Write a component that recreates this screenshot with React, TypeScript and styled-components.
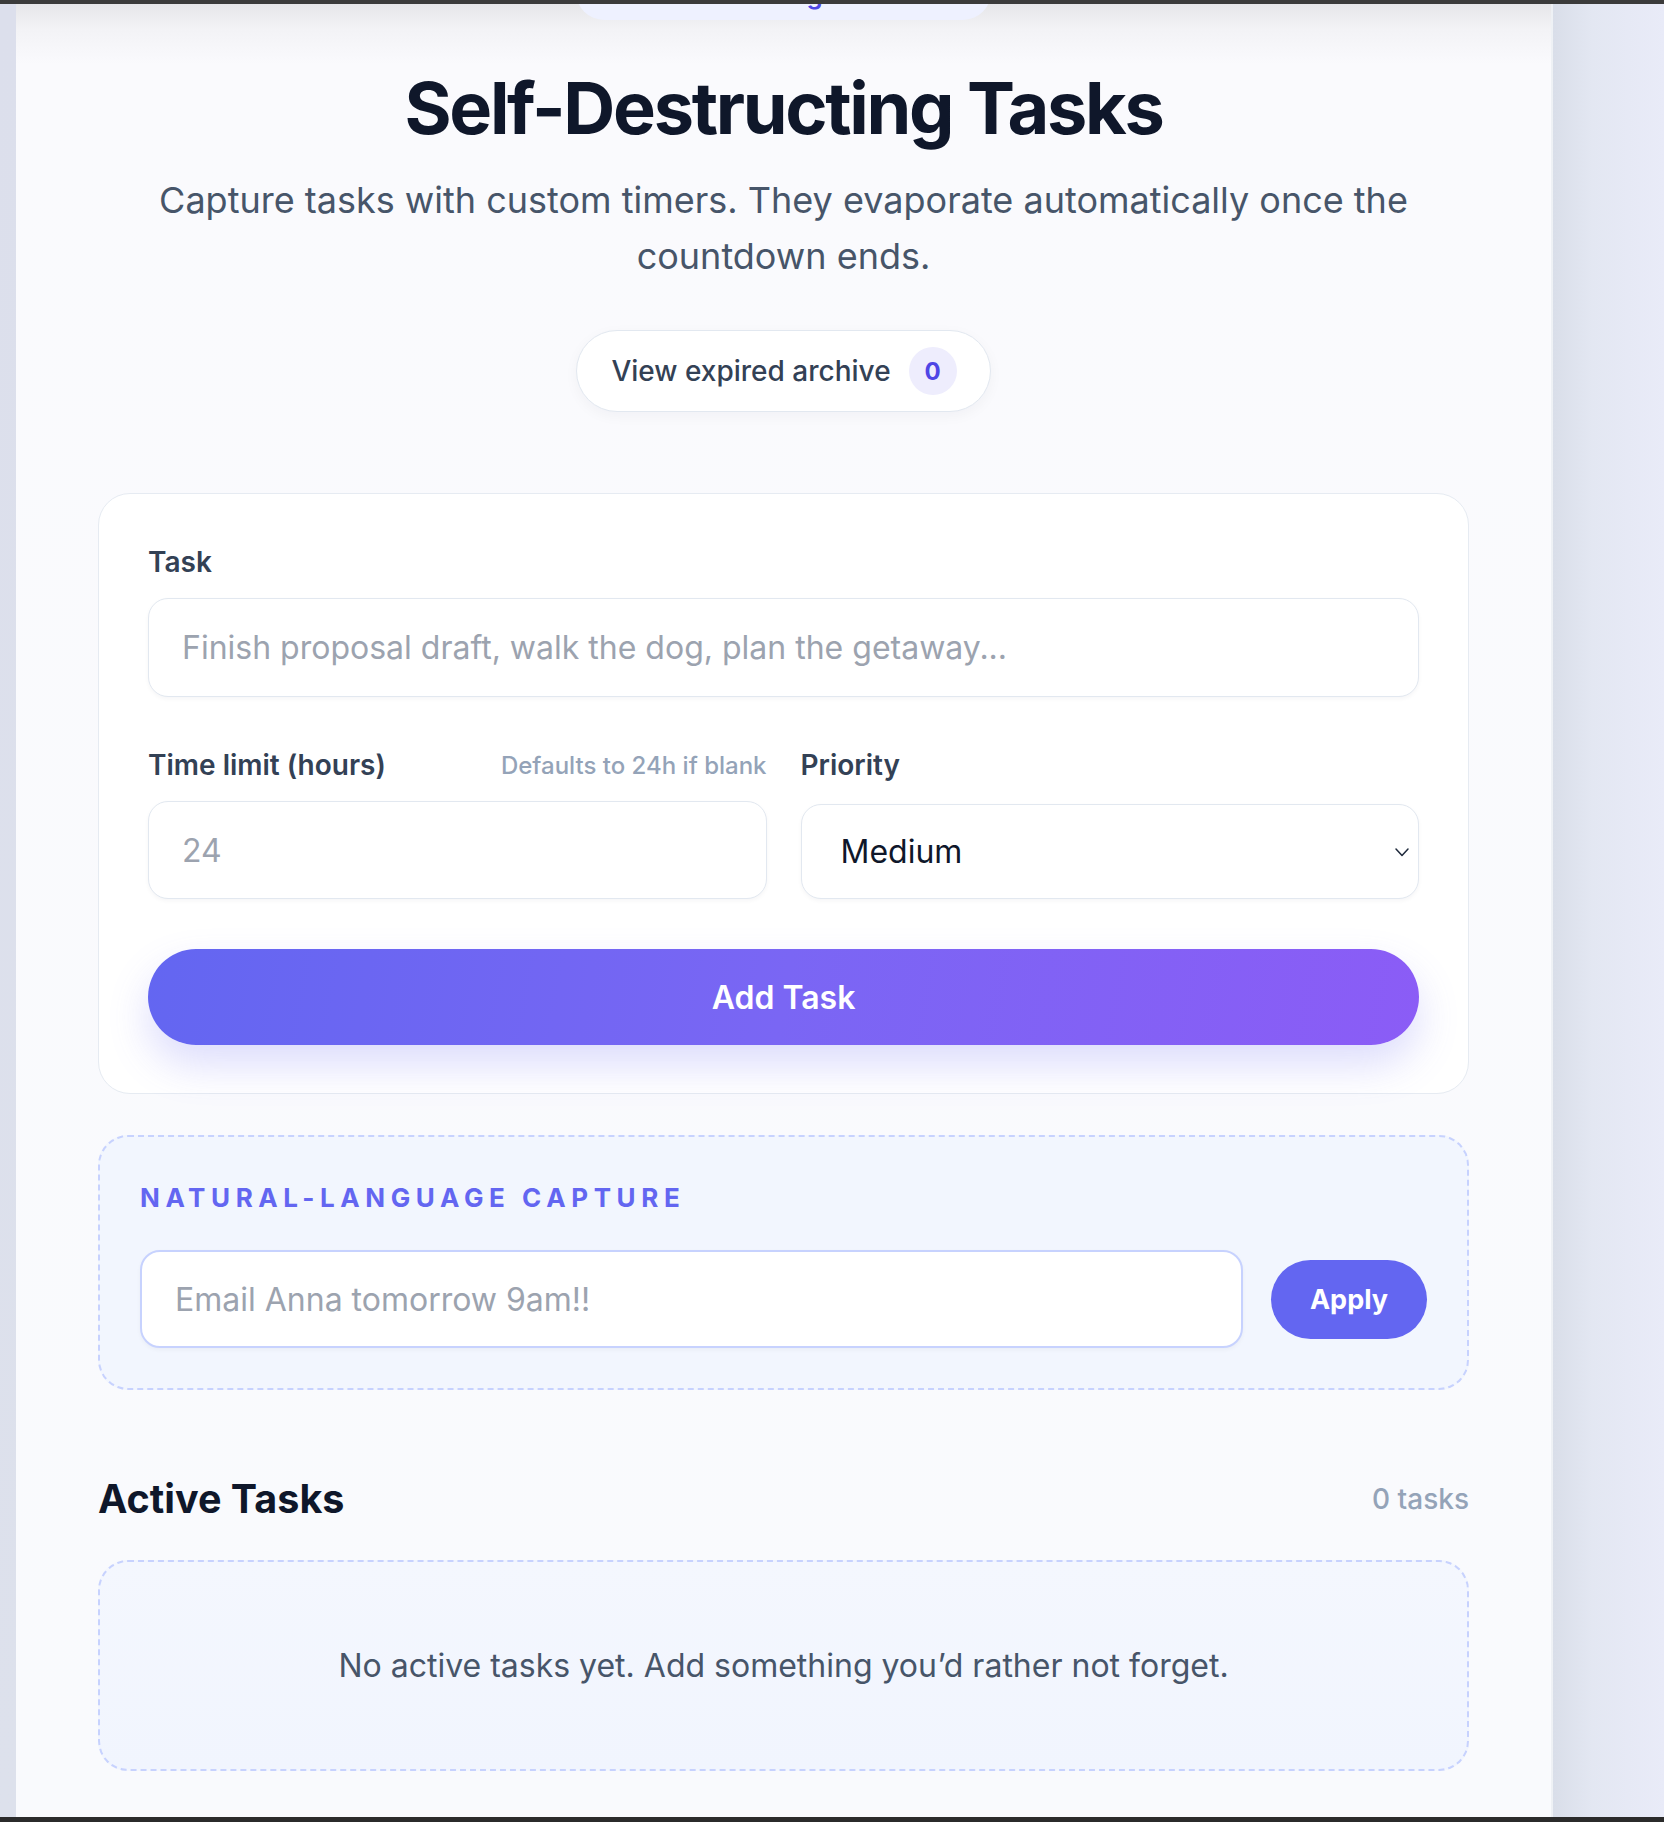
import styled, { createGlobalStyle } from "styled-components";

const GlobalStyle = createGlobalStyle`
  html, body {
    margin: 0;
    padding: 0;
    background: #e3e5f1;
  }
  * {
    box-sizing: border-box;
  }
  body {
    font-family: Inter, "Noto Sans", "Liberation Sans", sans-serif;
    -webkit-font-smoothing: antialiased;
  }
`;

const Frame = styled.div`
  height: 1822px;
  display: grid;
  grid-template-columns: 16px 1535px 1fr;
  border-top: 4px solid #3b3b3b;
  border-bottom: 5px solid #2b2b2b;
  overflow: hidden;
`;

const Gutter = styled.div`
  background: linear-gradient(180deg, #dcdfec 0%, #dde1ec 100%);
`;

const SideShade = styled.div`
  border-left: 2px solid #eef1f5;
  background: linear-gradient(90deg, #d9dee9 0%, #e3e7f2 35%, #e9ebf8 100%);
`;

const Panel = styled.main`
  display: flex;
  flex-direction: column;
  align-items: center;
  padding: 0 82px;
  background: linear-gradient(
    180deg,
    #e6e6e9 0px,
    #f3f3f6 26px,
    #fafafd 60px,
    #f9fafd 100%
  );
`;

const TopBadge = styled.div`
  margin-top: -44px;
  height: 60px;
  width: 415px;
  padding-top: 5px;
  border-radius: 0 0 28px 28px;
  background: #eef1ff;
  color: #4f46e5;
  font-size: 26px;
  font-weight: 600;
  line-height: 60px;
  text-align: center;
  white-space: nowrap;
  overflow: hidden;
`;

const Title = styled.h1`
  margin: 48px 0 0;
  font-size: 72px;
  line-height: 1.1;
  font-weight: 700;
  letter-spacing: -0.032em;
  color: #0f172a;
`;

const Subtitle = styled.p`
  margin: 25px 0 0;
  max-width: 1300px;
  font-size: 36px;
  line-height: 56px;
  color: #475569;
  text-align: center;
`;

const ArchiveButton = styled.button`
  margin-top: 46px;
  height: 82px;
  display: flex;
  align-items: center;
  gap: 18px;
  padding: 0 33px 0 34px;
  border: 1.5px solid #e2e8f0;
  border-radius: 999px;
  background: #ffffff;
  box-shadow: 0 4px 14px rgba(15, 23, 42, 0.04);
  font-family: inherit;
  font-size: 28px;
  font-weight: 500;
  color: #334155;
`;

const CountBadge = styled.span`
  width: 48px;
  height: 48px;
  border-radius: 50%;
  display: grid;
  place-items: center;
  background: #eeedfd;
  color: #4f46e5;
  font-size: 24px;
  font-weight: 700;
`;

const FormCard = styled.section`
  margin-top: 81px;
  width: 100%;
  padding: 51px 49px 48px;
  border: 1.5px solid #e6ebf2;
  border-radius: 32px;
  background: #ffffff;
  display: flex;
  flex-direction: column;
`;

const Field = styled.label`
  display: flex;
  flex-direction: column;
`;

const LabelRow = styled.div`
  display: flex;
  justify-content: space-between;
  align-items: center;
  margin-bottom: 19px;
`;

const LabelText = styled.span`
  font-size: 28px;
  font-weight: 600;
  color: #334155;
`;

const Hint = styled.span`
  font-size: 24px;
  font-weight: 500;
  color: #94a3b8;
`;

const TextInput = styled.input<{ $tall?: number }>`
  height: ${(p) => p.$tall ?? 98}px;
  width: 100%;
  padding: 0 33px;
  border: 1.5px solid #e2e8f0;
  border-radius: 20px;
  background: #ffffff;
  box-shadow: 0 2px 4px rgba(15, 23, 42, 0.04);
  font-family: inherit;
  font-size: 32px;
  color: #0f172a;
  outline: none;

  &::placeholder {
    color: #9ca3af;
  }
`;

const FieldRow = styled.div`
  margin-top: 51px;
  display: grid;
  grid-template-columns: 1fr 1fr;
  column-gap: 34px;
  align-items: start;
`;

const SelectWrap = styled.div`
  position: relative;
  margin-top: 3px;
`;

const Select = styled.select`
  appearance: none;
  width: 100%;
  height: 95px;
  padding: 0 60px 0 39px;
  border: 1.5px solid #e2e8f0;
  border-radius: 20px;
  background: #ffffff;
  box-shadow: 0 2px 4px rgba(15, 23, 42, 0.04);
  font-family: inherit;
  font-size: 32px;
  color: #0f172a;
  outline: none;
`;

const Chevron = styled.svg`
  position: absolute;
  right: 8px;
  top: 50%;
  transform: translateY(-50%);
  pointer-events: none;
`;

const PrimaryButton = styled.button`
  margin-top: 50px;
  height: 96px;
  border: none;
  border-radius: 999px;
  background: linear-gradient(100deg, #6366f1 0%, #7a66f4 50%, #8b5cf6 100%);
  box-shadow: 0 20px 40px rgba(99, 102, 241, 0.22);
  color: #ffffff;
  font-family: inherit;
  font-size: 32px;
  font-weight: 600;
`;

const CaptureBox = styled.section`
  margin-top: 41px;
  width: 100%;
  padding: 45px 40px 40px;
  border: 2px dashed #c7d2fe;
  border-radius: 30px;
  background: #f2f6fe;
`;

const Eyebrow = styled.div`
  font-size: 26px;
  font-weight: 700;
  letter-spacing: 0.215em;
  color: #6366f1;
  text-transform: uppercase;
`;

const CaptureRow = styled.div`
  margin-top: 37px;
  display: flex;
  align-items: center;
  gap: 28px;
`;

const CaptureInput = styled(TextInput)`
  flex: 1;
  border: 2px solid #c7d2fe;
`;

const ApplyButton = styled.button`
  height: 79px;
  padding: 0 39px;
  border: none;
  border-radius: 999px;
  background: #6366f1;
  color: #ffffff;
  font-family: inherit;
  font-size: 27px;
  font-weight: 700;
`;

const SectionHead = styled.div`
  margin-top: 85px;
  width: 100%;
  display: flex;
  justify-content: space-between;
  align-items: center;
`;

const SectionTitle = styled.h2`
  margin: 0;
  font-size: 39.5px;
  font-weight: 700;
  color: #0f172a;
`;

const TaskCount = styled.span`
  font-size: 28px;
  font-weight: 500;
  color: #94a3b8;
`;

const EmptyState = styled.div`
  margin-top: 37px;
  width: 100%;
  height: 211px;
  display: grid;
  place-items: center;
  border: 2px dashed #c7d2fe;
  border-radius: 30px;
  background: linear-gradient(180deg, #f4f7fe 0%, #f1f5fe 100%);
  font-size: 32px;
  color: #475569;
`;

export default function App() {
  return (
    <>
      <GlobalStyle />
      <Frame>
        <Gutter />
        <Panel>
          <TopBadge>Countdown engine active</TopBadge>
          <Title>Self-Destructing Tasks</Title>
          <Subtitle>
            Capture tasks with custom timers. They evaporate automatically once
            the countdown ends.
          </Subtitle>
          <ArchiveButton type="button">
            View expired archive
            <CountBadge>0</CountBadge>
          </ArchiveButton>

          <FormCard>
            <Field>
              <LabelRow>
                <LabelText>Task</LabelText>
              </LabelRow>
              <TextInput
                $tall={99}
                placeholder="Finish proposal draft, walk the dog, plan the getaway..."
              />
            </Field>
            <FieldRow>
              <Field>
                <LabelRow>
                  <LabelText>Time limit (hours)</LabelText>
                  <Hint>Defaults to 24h if blank</Hint>
                </LabelRow>
                <TextInput $tall={98} placeholder="24" />
              </Field>
              <Field>
                <LabelRow>
                  <LabelText>Priority</LabelText>
                </LabelRow>
                <SelectWrap>
                  <Select defaultValue="medium">
                    <option value="low">Low</option>
                    <option value="medium">Medium</option>
                    <option value="high">High</option>
                  </Select>
                  <Chevron width="18" height="16" viewBox="0 0 18 16">
                    <path
                      d="M3 5 L9 11.5 L15 5"
                      fill="none"
                      stroke="#1e293b"
                      strokeWidth="1.5"
                      strokeLinecap="round"
                      strokeLinejoin="round"
                    />
                  </Chevron>
                </SelectWrap>
              </Field>
            </FieldRow>
            <PrimaryButton type="button">Add Task</PrimaryButton>
          </FormCard>

          <CaptureBox>
            <Eyebrow>Natural-language capture</Eyebrow>
            <CaptureRow>
              <CaptureInput placeholder="Email Anna tomorrow 9am!!" />
              <ApplyButton type="button">Apply</ApplyButton>
            </CaptureRow>
          </CaptureBox>

          <SectionHead>
            <SectionTitle>Active Tasks</SectionTitle>
            <TaskCount>0 tasks</TaskCount>
          </SectionHead>
          <EmptyState>
            No active tasks yet. Add something you’d rather not forget.
          </EmptyState>
        </Panel>
        <SideShade />
      </Frame>
    </>
  );
}
